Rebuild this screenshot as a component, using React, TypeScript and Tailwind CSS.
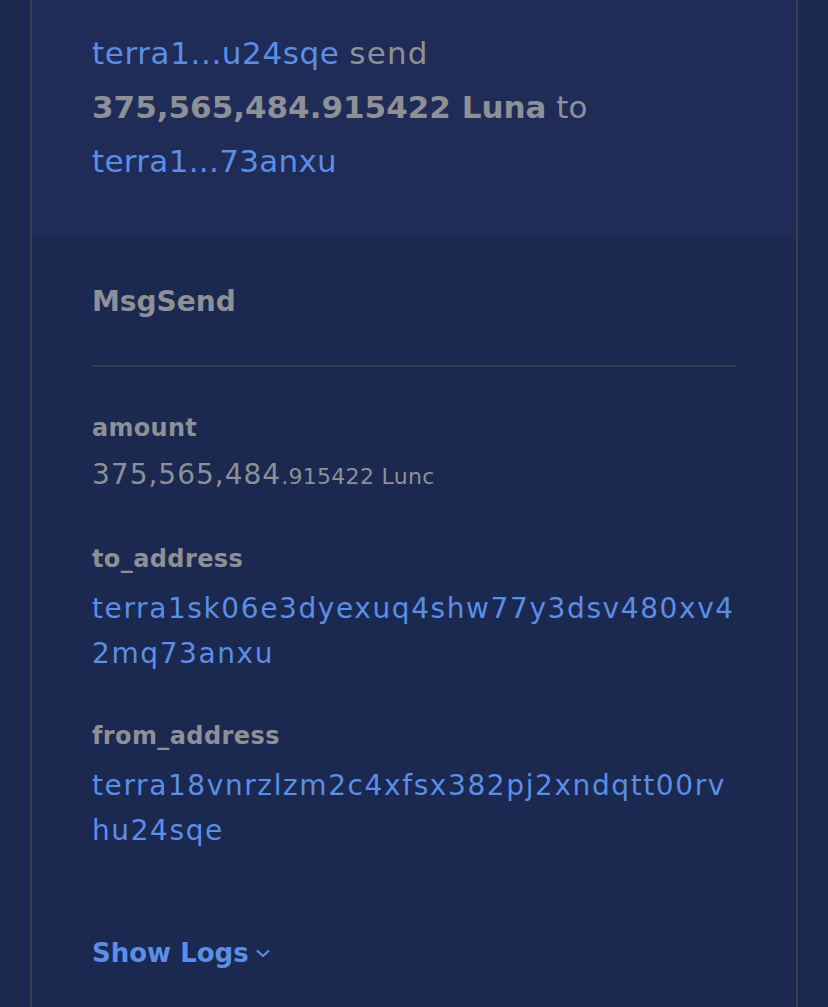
import React from "react";

const font = { fontFamily: '"DejaVu Sans", "Open Sans", sans-serif' };

export default function App() {
  return (
    <div className="min-h-screen w-full bg-[#1b2850] px-[30px]" style={font}>
      <div className="border-x-2 border-[#3a3e4c] min-h-[1007px]">
        <div className="bg-[#1f2c57] px-[60px] pt-[26px] pb-[48px] text-[31px] leading-[54px] text-[#8e9097]">
          <div>
            <span className="text-[#5b8ee6] tracking-[0.6px]">terra1...u24sqe</span>{" "}
            <span className="tracking-[1.2px]">send</span>
          </div>
          <div>
            <span className="font-bold">375,565,484.915422 Luna</span> to
          </div>
          <div className="text-[#5b8ee6] tracking-[0.3px]">terra1...73anxu</div>
        </div>
        <div className="px-[60px] pt-[46px] pb-[40px] text-[#8e9097]">
          <div className="text-[28px] leading-[40px] font-bold">MsgSend</div>
          <div className="mt-[43px] h-[2px] bg-[#353a50]" />
          <div className="mt-[44px] text-[24px] leading-[34px] font-bold tracking-[0.3px]">amount</div>
          <div className="mt-[10px] text-[28px] leading-[40px] tracking-[1px]">
            375,565,484<span className="text-[22px] tracking-[0.3px]">.915422 Lunc</span>
          </div>
          <div className="mt-[45px] text-[24px] leading-[34px] font-bold tracking-[0.4px]">to_address</div>
          <div className="mt-[10px] text-[28px] leading-[45px] text-[#5b8ee6] break-all tracking-[1.6px]">
            terra1sk06e3dyexuq4shw77y3dsv480xv42mq73anxu
          </div>
          <div className="mt-[43px] text-[24px] leading-[34px] font-bold tracking-[0.4px]">from_address</div>
          <div className="mt-[10px] text-[28px] leading-[45px] text-[#5b8ee6] break-all tracking-[1.6px]">
            terra18vnrzlzm2c4xfsx382pj2xndqtt00rvhu24sqe
          </div>
          <div className="mt-[82px] flex items-center gap-[6px] text-[26px] leading-[36px] font-bold text-[#5b8ee6]">
            <span>Show Logs</span>
            <svg width="16" height="10" viewBox="0 0 16 10" fill="none">
              <path d="M2.5 3l5.5 5 5.5-5" stroke="#5b8ee6" strokeWidth="2" strokeLinecap="round" strokeLinejoin="round" />
            </svg>
          </div>
        </div>
      </div>
    </div>
  );
}
